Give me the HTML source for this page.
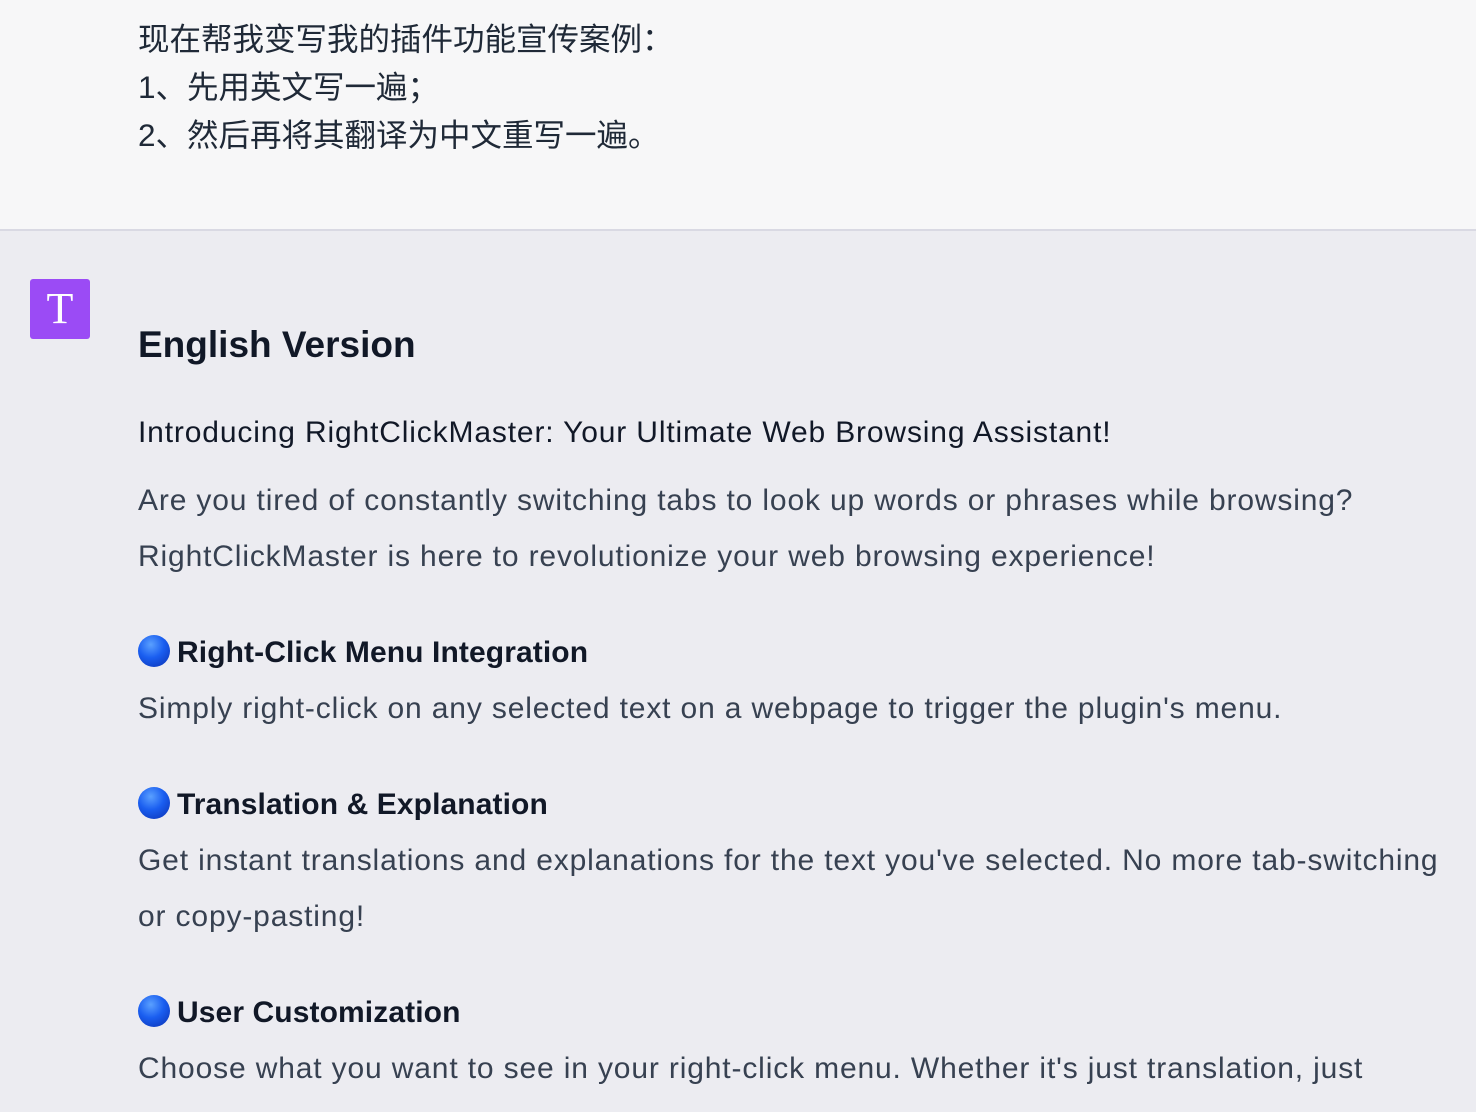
<!DOCTYPE html>
<html><head><meta charset="utf-8"><style>
html,body{margin:0;padding:0;width:1476px;height:1112px;overflow:hidden;font-family:"Liberation Sans","Noto Sans CJK SC",sans-serif;}
.top{position:absolute;left:0;top:0;width:1476px;height:229px;background:#f7f7f8;border-bottom:2px solid #d9d9e3;}
.bot{position:absolute;left:0;top:231px;width:1476px;height:881px;background:#ececf1;}
.t{position:absolute;left:138px;white-space:nowrap;color:#374151;font-size:30px;letter-spacing:0.85px;line-height:40px;}
.cn{font-size:31.5px;letter-spacing:0;color:#1f2937;}
.h{font-weight:bold;color:#111827;letter-spacing:0.1px;}
.av{position:absolute;left:30px;top:279px;width:60px;height:60px;background:#9b4bf5;border-radius:3px;color:#fff;font-family:"Liberation Serif",serif;font-size:44px;line-height:60px;text-align:center;}
.dot{display:inline-block;width:32px;height:32px;border-radius:50%;background:radial-gradient(circle at 40% 30%,#5aa0ff,#1a5ef0 45%,#0a2fb0 100%);vertical-align:-5px;margin-right:7px;}
</style></head><body>
<div class="top"></div>
<div class="bot"></div>
<div class="t cn" style="top:19px">现在帮我变写我的插件功能宣传案例：</div>
<div class="t cn" style="top:67px">1、先用英文写一遍；</div>
<div class="t cn" style="top:115px">2、然后再将其翻译为中文重写一遍。</div>
<div class="av">T</div>
<div class="t h" style="top:322px;font-size:37px;line-height:46px;letter-spacing:0">English Version</div>
<div class="t" style="top:413px;color:#111827">Introducing RightClickMaster: Your Ultimate Web Browsing Assistant!</div>
<div class="t" style="top:481px">Are you tired of constantly switching tabs to look up words or phrases while browsing?</div>
<div class="t" style="top:537px">RightClickMaster is here to revolutionize your web browsing experience!</div>
<div class="t h" style="top:633px"><span class="dot"></span>Right-Click Menu Integration</div>
<div class="t" style="top:689px">Simply right-click on any selected text on a webpage to trigger the plugin's menu.</div>
<div class="t h" style="top:785px"><span class="dot"></span>Translation &amp; Explanation</div>
<div class="t" style="top:841px">Get instant translations and explanations for the text you've selected. No more tab-switching</div>
<div class="t" style="top:897px">or copy-pasting!</div>
<div class="t h" style="top:993px"><span class="dot"></span>User Customization</div>
<div class="t" style="top:1049px">Choose what you want to see in your right-click menu. Whether it's just translation, just</div>
</body></html>
